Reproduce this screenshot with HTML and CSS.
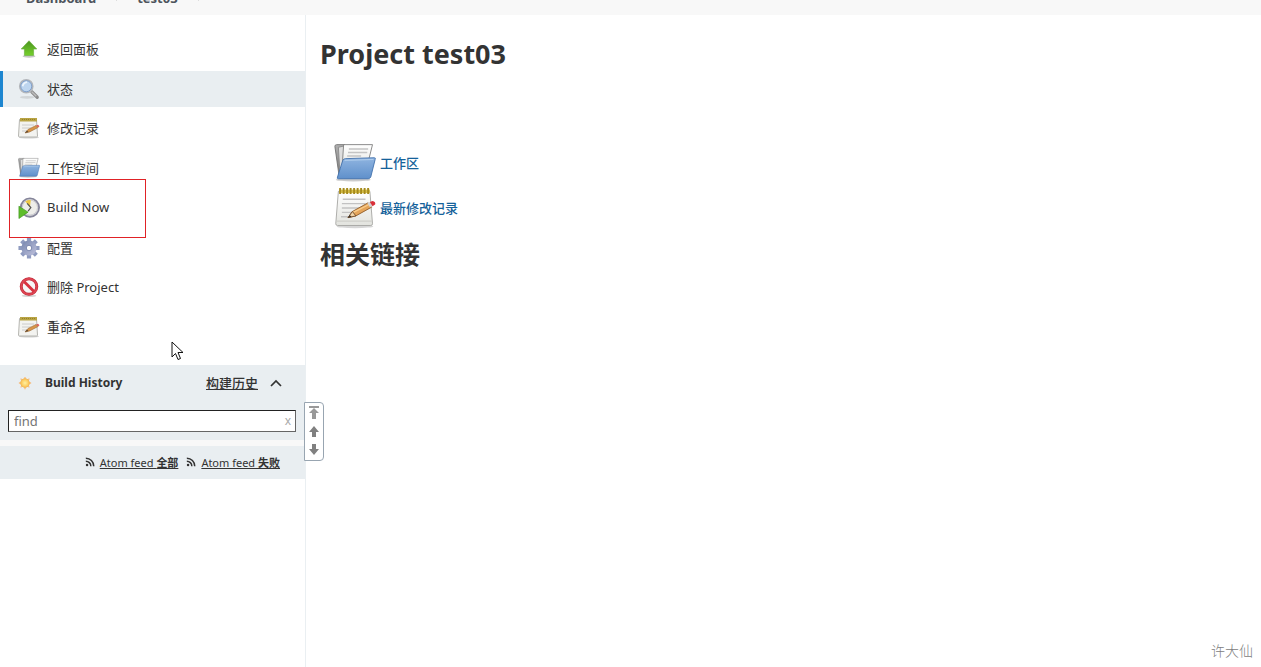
FILE: index.html
```html
<!DOCTYPE html>
<html lang="zh-CN">
<head>
  <meta charset="UTF-8">
  <meta name="viewport" content="width=device-width, initial-scale=1.0">
  <title>test03 [Jenkins]</title>
  <link rel="stylesheet" href="styles.css">
</head>
<body>
  <!-- Shared icons -->
  <svg class="sprite" aria-hidden="true">
    <defs>
      <linearGradient id="paper" x1="0" y1="0" x2="0" y2="1">
        <stop offset="0" stop-color="#ffffff"/>
        <stop offset="1" stop-color="#e2e3de"/>
      </linearGradient>
      <linearGradient id="blue" x1="0" y1="0" x2="0" y2="1">
        <stop offset="0" stop-color="#8fb4e0"/>
        <stop offset="1" stop-color="#5f90cb"/>
      </linearGradient>
      <linearGradient id="grey" x1="0" y1="0" x2="0" y2="1">
        <stop offset="0" stop-color="#b0b0b0"/>
        <stop offset="1" stop-color="#7a7a7a"/>
      </linearGradient>
      <linearGradient id="green" x1="0" y1="0" x2="0" y2="1">
        <stop offset="0" stop-color="#4b9420"/>
        <stop offset="1" stop-color="#76d02c"/>
      </linearGradient>
      <linearGradient id="gearfill" x1="0" y1="0" x2="1" y2="1">
        <stop offset="0" stop-color="#7584ad"/>
        <stop offset="1" stop-color="#c0c2dd"/>
      </linearGradient>
      <radialGradient id="sunfill">
        <stop offset="0" stop-color="#fff0a0"/>
        <stop offset="1" stop-color="#fbc250"/>
      </radialGradient>
    </defs>
    <symbol id="notepad" viewBox="0 0 48 48">
      <ellipse cx="24" cy="45" rx="21" ry="2" fill="#d6d6d6"/>
      <path d="M5 5h36l3 37q0 2-2 2H4q-2 0-2-2z" fill="url(#paper)" stroke="#a3a3a0"/>
      <path d="M3 39h40" stroke="#cfcfca" stroke-width="1.500"/>
      <path d="M10 14h26M9 19h27M9 24h20M9 29h12M8 34h8" stroke="#c2c2c2" stroke-width="1.500"/>
      <path d="M6 3h35v4H6z" fill="#d8c04a"/>
      <path d="M7 1v7M11 1v7M15 1v7M19 1v7M23 1v7M27 1v7M31 1v7M35 1v7M39 1v7" stroke="#a58a1c" stroke-width="2.200"/>
      <path d="M16 35l5-7 18-10 4 5-18 10z" fill="#e5a55a" stroke="#8d5a28"/>
      <path d="M22 29l18-9" stroke="#f8ce8d" stroke-width="1.500"/>
      <path d="M16 35l5-7 4 5z" fill="#f0d3a6" stroke="#6e4725"/>
      <path d="M16 35l2-3 2 2z" fill="#333"/>
      <path d="M38 18l3-1 3 5-3 1z" fill="#d3d3d3"/>
      <path d="M41 17l3-1q4 1 3 4l-3 2z" fill="#d9303a"/>
    </symbol>
    <symbol id="notepad-small" viewBox="0 0 22 22">
      <ellipse cx="11" cy="20.500" rx="10" ry="1" fill="#d2d2d2"/>
      <path d="M1.500 2.500h17l1 16.500q0 1-1 1h-17q-1 0-1-1z" fill="#f3f3f0" stroke="#b5b5b0"/>
      <path d="M4 8h12M4 11h9M4 14h5" stroke="#cccccc"/>
      <path d="M2 1h17v3.500H2z" fill="#b9a444"/>
      <path d="M4 2.500h14" stroke="#95812c" stroke-dasharray="1 1"/>
      <path d="M7 16l3-3.500 8-4 2 2-8.500 4.500z" fill="#d99648" stroke="#9b6b38" stroke-width=".6"/>
      <path d="M7 16l2-2.400 1.500 1.500z" fill="#5c4630"/>
      <path d="M18 8.500l2-.8 1.500 1.500-1.500 1.300z" fill="#d8605a"/>
    </symbol>
    <symbol id="folder" viewBox="0 0 48 48">
      <ellipse cx="22" cy="43" rx="20" ry="2" fill="#cccccc"/>
      <path d="M1 5q0-2 2-2h9l3 3h24l-1 34H6z" fill="url(#grey)" stroke="#707070"/>
      <path d="M5 6l9-2-2 34-5 2z" fill="#dedede" stroke="#888"/>
      <path d="M11 3h33l-5 20-30 10z" fill="url(#paper)" stroke="#7c7c7c"/>
      <path d="M17 8h22M16 12h22M15 16h16" stroke="#c4c4c4" stroke-width="1.500"/>
      <path d="M10 21q1-2 3-2l33-1q2 0 1 2l-5 20q-1 2-3 2H5q-2 0-1-2z" fill="url(#blue)" stroke="#3f6fab"/>
      <path d="M12 21l33-1" stroke="#b7d2ef"/>
    </symbol>
    <symbol id="rss" viewBox="0 0 12 12">
      <circle cx="2.500" cy="9.500" r="1.500" fill="#333"/>
      <path d="M1 5a6 6 0 0 1 6 6M1 1.500a9.500 9.500 0 0 1 9.500 9.500" fill="none" stroke="#333" stroke-width="1.800"/>
    </symbol>
  </svg>

  <nav class="breadcrumbs">
    <a href="#">Dashboard</a>
    <span class="crumb-sep"></span>
    <a href="#">test03</a>
    <span class="crumb-sep"></span>
  </nav>

  <div class="page">
    <aside class="side-panel">
      <ul class="tasks">
        <li><a class="task" href="#">
          <svg class="task-icon" viewBox="0 0 24 24"><ellipse cx="12" cy="20" rx="7" ry="1.500" fill="#c6c6c6"/><path d="M12 3l8.500 9h-3.500v7H7v-7H3.500z" fill="url(#green)" stroke="#69ad3f" stroke-width=".7"/></svg>
          <span>返回面板</span></a></li>
        <li><a class="task active" href="#">
          <svg class="task-icon" viewBox="0 0 24 24"><ellipse cx="10" cy="21" rx="8" ry="1.500" fill="#d1d5d7"/><path d="M15 15l6 6" stroke="#8c8c8c" stroke-width="3.500" stroke-linecap="round"/><path d="M15 15l5 5" stroke="#bdbdbd" stroke-width="1.500"/><circle cx="9" cy="9" r="7" fill="#bdd5ef" stroke="#b3b6ba" stroke-width="2"/><circle cx="9" cy="9" r="6" fill="none" stroke="#7a9dcc"/><path d="M5 9q1-4 5-4.500" stroke="#edf5fd" stroke-width="2" fill="none"/></svg>
          <span>状态</span></a></li>
        <li><a class="task" href="#"><svg class="task-icon"><use href="#notepad-small"/></svg><span>修改记录</span></a></li>
        <li><a class="task" href="#"><svg class="task-icon"><use href="#folder"/></svg><span>工作空间</span></a></li>
        <li class="marked"><a class="task" href="#">
          <svg class="task-icon" viewBox="0 0 24 24"><circle cx="13" cy="11.500" r="10" fill="#eeeeea" stroke="#85859a" stroke-width="2"/><circle cx="13" cy="11.500" r="8.300" fill="none" stroke="#c3c3ca"/><path d="M13 11L8 5q3-2 6-1.500z" fill="#edc844"/><path d="M10 7l4 4.500-3 4" fill="none" stroke="#555" stroke-width="1.300"/><path d="M1 10l10 6.500L1 23.500z" fill="#5ebd2b" stroke="#3f9520" stroke-width=".7"/></svg>
          <span>Build Now</span></a></li>
        <li><a class="task" href="#">
          <svg class="task-icon" viewBox="0 0 24 24"><g stroke="#8f9bc0" stroke-width="4.600"><path d="M12 .5v23M.5 12h23M4 4l16 16M20 4L4 20"/></g><circle cx="12" cy="12" r="8.300" fill="url(#gearfill)"/><circle cx="12" cy="12" r="3" fill="#fff" stroke="#727fa9"/></svg>
          <span>配置</span></a></li>
        <li><a class="task" href="#">
          <svg class="task-icon" viewBox="0 0 24 24"><ellipse cx="12" cy="21.500" rx="8" ry="1.500" fill="#d7d7d7"/><circle cx="12" cy="11.500" r="8.500" fill="#f6f6f6" stroke="#c02434" stroke-width="3.200"/><path d="M6 5.500l12 12" stroke="#d83240" stroke-width="3.200"/><circle cx="12" cy="11.500" r="8.500" fill="none" stroke="#dc4552" stroke-width="2"/></svg>
          <span>删除 Project</span></a></li>
        <li><a class="task" href="#"><svg class="task-icon"><use href="#notepad-small"/></svg><span>重命名</span></a></li>
      </ul>

      <div class="builds">
        <section class="history">
          <div class="history-head">
            <svg class="sun" viewBox="0 0 16 16"><path d="M8 1v14M1 8h14M3 3l10 10M13 3L3 13" stroke="#f5bd80" stroke-width="1.500"/><circle cx="8" cy="8" r="5" fill="url(#sunfill)" stroke="#efb04c" stroke-width=".8"/></svg>
            <h3>Build History</h3>
            <a class="trend" href="#">构建历史</a>
            <button class="collapse" type="button" aria-label="Collapse">
              <svg viewBox="0 0 12 8"><path d="M1 7l5-5 5 5" fill="none" stroke="#333" stroke-width="1.700"/></svg>
            </button>
          </div>
          <div class="search">
            <input type="text" placeholder="find" aria-label="find">
            <button class="clear" type="button">x</button>
          </div>
        </section>

        <div class="feeds">
          <a href="#"><svg class="rss"><use href="#rss"/></svg><span>Atom feed <b>全部</b></span></a>
          <a href="#"><svg class="rss"><use href="#rss"/></svg><span>Atom feed <b>失败</b></span></a>
        </div>
      </div>

      <div class="pager">
        <button type="button" aria-label="Newest"><svg viewBox="0 0 12 14"><path d="M1 0h10v2H1zM6 2l5 5H8v6H4V7H1z" fill="#999"/></svg></button>
        <button type="button" aria-label="Newer"><svg viewBox="0 0 12 14"><path d="M6 1l5 6H8v5H4V7H1z" fill="#808080"/></svg></button>
        <button type="button" aria-label="Older"><svg viewBox="0 0 12 14"><path d="M6 12l5-6H8V1H4v5H1z" fill="#808080"/></svg></button>
      </div>
    </aside>

    <main class="main-panel">
      <h1>Project test03</h1>
      <div class="links">
        <a href="#"><svg class="large-icon"><use href="#folder"/></svg><span>工作区</span></a>
        <a href="#"><svg class="large-icon"><use href="#notepad"/></svg><span>最新修改记录</span></a>
      </div>
      <h2>相关链接</h2>
    </main>
  </div>

  <svg class="cursor" viewBox="0 0 13 20" aria-hidden="true"><path d="M1 1v15l3.500-3.500 2.500 6 2.500-1-2.500-6h5z" fill="#fff" stroke="#111"/></svg>
  <span class="signature">许大仙</span>
</body>
</html>
```
FILE: styles.css
```css
* {
  box-sizing: border-box;
}

body {
  position: relative;
  margin: 0;
  min-height: 100vh;
  display: flex;
  flex-direction: column;
  background: #fff;
  color: #333;
  font-family: "Noto Sans", "Noto Sans CJK SC", sans-serif;
  font-size: 13px;
}

a {
  color: #333;
}

h1,
h2,
h3,
ul {
  margin: 0;
  padding: 0;
}

button {
  padding: 0;
  border: 0;
  background: none;
  font: inherit;
  cursor: pointer;
}

svg {
  display: block;
}

.sprite {
  position: absolute;
  width: 0;
  height: 0;
}

/* Breadcrumbs */
.breadcrumbs {
  height: 15px;
  padding: 0 26px 8px;
  display: flex;
  align-items: flex-end;
  gap: 20px;
  overflow: hidden;
  background: #f8f8f8;
}

.breadcrumbs a {
  color: #4d545d;
  font-weight: bold;
  line-height: 18px;
  text-decoration: none;
}

.crumb-sep {
  width: 1px;
  height: 8px;
  margin-bottom: 6px;
  background: #ddd;
}

.page {
  flex: 1;
  display: flex;
}

/* Side panel */
.side-panel {
  position: relative;
  width: 306px;
  flex-shrink: 0;
  border-right: 1px solid #eaeff2;
}

.tasks {
  min-height: 314px;
  margin: 16px 0 20px;
  display: flex;
  flex-direction: column;
  justify-content: space-between;
  list-style: none;
}

.task {
  height: 36px;
  padding-left: 18px;
  display: flex;
  align-items: center;
  gap: 7px;
  text-decoration: none;
}

.task span {
  padding-bottom: 1px;
}

.task.active {
  padding-left: 15px;
  border-left: 3px solid #1d86d0;
  background: #e9eef1;
}

.task-icon {
  width: 22px;
  height: 22px;
}

.marked {
  position: relative;
}

.marked::after {
  content: "";
  position: absolute;
  top: -11px;
  left: 9px;
  width: 135px;
  height: 57px;
  border: 1px solid #e02226;
  pointer-events: none;
}

.builds {
  display: flex;
  flex-direction: column;
  gap: 6px;
  background: #f8f8f8;
}

.history {
  padding: 0 9px 8px 8px;
  background: #e9eef1;
}

.history-head {
  height: 45px;
  padding: 0 14px 10px 10px;
  display: flex;
  align-items: center;
}

.history-head h3 {
  margin-left: 13px;
  font-size: 12px;
}

.sun {
  width: 14px;
  height: 14px;
}

.trend {
  margin-left: auto;
  font-weight: 500;
}

.collapse {
  width: 12px;
  margin-left: 12px;
}

.search {
  height: 22px;
  display: flex;
  align-items: center;
  background: #fff;
  border: 1px solid #666;
  border-top-color: #222;
  border-left-color: #222;
}

.search input {
  flex: 1;
  min-width: 0;
  padding: 0 5px;
  border: 0;
  outline: 0;
  background: none;
  font: inherit;
}

.search input::placeholder {
  color: #757575;
}

.clear {
  padding-right: 4px;
  color: #aaa;
  font-size: 12px;
  line-height: 16px;
}

.feeds {
  height: 33px;
  padding: 0 25px 2px 0;
  display: flex;
  justify-content: flex-end;
  align-items: center;
  gap: 8px;
  background: #e9eef1;
  font-size: 11px;
}

.feeds a {
  display: flex;
  align-items: center;
  gap: 5px;
  text-decoration: none;
}

.feeds span {
  text-decoration: underline;
}

.rss {
  width: 10px;
  height: 10px;
}

.pager {
  position: absolute;
  top: 387px;
  right: -19px;
  width: 20px;
  height: 59px;
  padding: 3px 0;
  display: flex;
  flex-direction: column;
  align-items: center;
  justify-content: space-between;
  background: #fff;
  border: 1px solid #98a5b1;
  border-radius: 0 4px 4px 0;
}

.pager svg {
  width: 12px;
  height: 14px;
}

/* Main panel */
.main-panel {
  flex: 1;
  padding: 19px 14px;
}

h1 {
  font-size: 27px;
  line-height: 40px;
}

.links {
  margin: 66px 0 6px 14px;
  display: flex;
  flex-direction: column;
  align-items: flex-start;
}

.links a {
  height: 45px;
  display: flex;
  align-items: center;
  gap: 4px;
  color: #15629a;
  font-weight: 500;
  text-decoration: none;
}

.large-icon {
  width: 42px;
  height: 42px;
}

h2 {
  font-size: 25px;
  line-height: 36px;
}

.cursor {
  position: absolute;
  top: 341px;
  left: 171px;
  width: 13px;
  height: 20px;
}

.signature {
  position: absolute;
  right: 8px;
  bottom: 6px;
  color: #808080;
  font-size: 14px;
  font-weight: 300;
  line-height: 20px;
}
```
